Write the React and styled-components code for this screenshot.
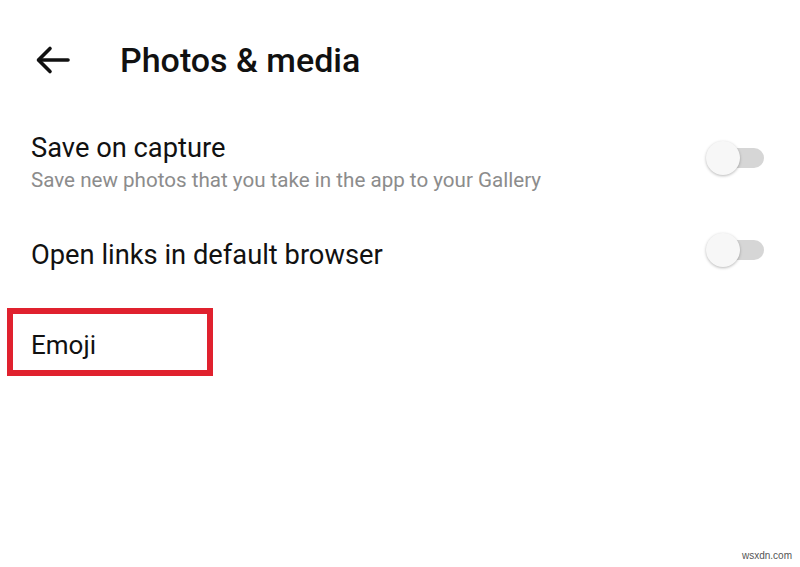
import React from 'react'
import styled, { createGlobalStyle } from 'styled-components'

const Global = createGlobalStyle`
  html, body {
    margin: 0;
    padding: 0;
    background: #fff;
  }
  body {
    font-family: Roboto, "Noto Sans", sans-serif;
    color: #111;
  }
`

const Screen = styled.div`
  position: relative;
  width: 800px;
  height: 567px;
  background: #fff;
  overflow: hidden;
`

const Header = styled.div`
  display: flex;
  align-items: center;
  height: 120px;
  padding-left: 34px;
  gap: 48px;
`

const BackButton = styled.button`
  border: none;
  background: none;
  padding: 0;
  width: 38px;
  height: 38px;
  display: flex;
  align-items: center;
  justify-content: center;
`

const Title = styled.h1`
  margin: 0;
  font-size: 34px;
  font-weight: 500;
  color: #111;
`

const List = styled.div`
  display: flex;
  flex-direction: column;
`

const Row = styled.div`
  display: flex;
  align-items: flex-start;
  justify-content: space-between;
  padding: ${p => p.$top}px 36px 0 31px;
`

const Texts = styled.div`
  display: flex;
  flex-direction: column;
  gap: 4px;
  margin-top: ${p => p.$offset || 0}px;
`

const Label = styled.div`
  font-size: 27.3px;
  color: #111;
  line-height: 32px;
`

const Sub = styled.div`
  font-size: 20.6px;
  color: #8c8c8c;
  line-height: 24px;
`

const Switch = styled.div`
  position: relative;
  width: 60px;
  height: 36px;
  margin-top: ${p => p.$offset || 0}px;
  display: flex;
  align-items: center;
  justify-content: flex-end;
`

const Track = styled.div`
  width: 44px;
  height: 20px;
  border-radius: 10px;
  background: #d6d6d6;
`

const Thumb = styled.div`
  position: absolute;
  left: 2px;
  top: 1px;
  width: 34px;
  height: 34px;
  border-radius: 50%;
  background: #f7f7f7;
  box-shadow: 0 1px 3px rgba(0, 0, 0, 0.28);
`

const Highlight = styled.div`
  margin: 37px 0 0 7px;
  width: 206px;
  height: 68px;
  box-sizing: border-box;
  border: 6px solid #e0212e;
  display: flex;
  align-items: center;
  padding: 6px 0 0 18px;
  font-size: 26px;
  color: #111;
`

const Watermark = styled.div`
  position: absolute;
  right: 8px;
  bottom: 6px;
  font-family: "Liberation Sans", Arial, sans-serif;
  font-size: 10px;
  color: #555;
`

const Toggle = ({ offset }) => (
  <Switch $offset={offset}>
    <Track />
    <Thumb />
  </Switch>
)

export default function App() {
  return (
    <>
      <Global />
      <Screen>
        <Header>
          <BackButton>
            <svg width="36" height="30" viewBox="0 0 36 30" fill="none" stroke="#111" strokeWidth="3.6" strokeLinecap="round" strokeLinejoin="round">
              <path d="M33 15H4" />
              <path d="M15 3.5L3.5 15L15 26.5" />
            </svg>
          </BackButton>
          <Title>Photos &amp; media</Title>
        </Header>
        <List>
          <Row $top={12}>
            <Texts>
              <Label>Save on capture</Label>
              <Sub>Save new photos that you take in the app to your Gallery</Sub>
            </Texts>
            <Toggle offset={8} />
          </Row>
          <Row $top={40}>
            <Texts $offset={7}>
              <Label>Open links in default browser</Label>
            </Texts>
            <Toggle />
          </Row>
        </List>
        <Highlight>Emoji</Highlight>
        <Watermark>wsxdn.com</Watermark>
      </Screen>
    </>
  )
}
